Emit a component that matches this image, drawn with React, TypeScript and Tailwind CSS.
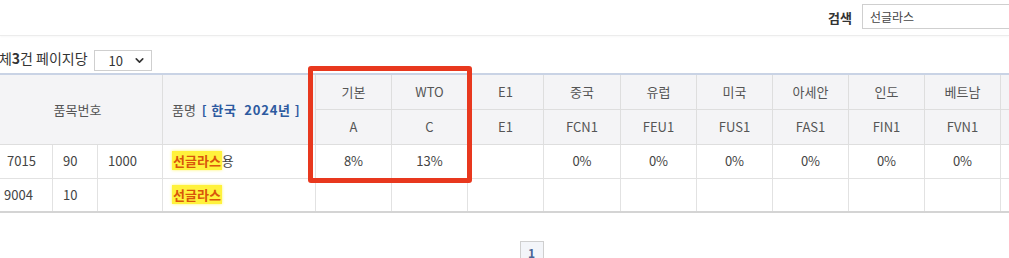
import { ChevronDown } from 'lucide-react';

const countries = [
  { name: '중국', code: 'FCN1' },
  { name: '유럽', code: 'FEU1' },
  { name: '미국', code: 'FUS1' },
  { name: '아세안', code: 'FAS1' },
  { name: '인도', code: 'FIN1' },
  { name: '베트남', code: 'FVN1' },
  { name: '', code: '' },
];

const font = { fontFamily: '"Noto Sans CJK KR", "Noto Sans", sans-serif' };

function Hl({ children }: { children: string }) {
  return <span className="bg-[#fff23c] text-[#d9560b] font-bold px-[1px] shadow-[0_0_3px_#fff56a]">{children}</span>;
}

export default function App() {
  const th = 'border border-[#dedede] bg-[#f4f4f6] text-[#555] font-normal text-center';
  const td = 'border border-[#e2e2e2] text-[#444] h-[34px]';

  return (
    <div className="relative w-[1009px] h-[258px] overflow-hidden bg-white text-[13px]" style={font}>
      {/* 검색 */}
      <div className="h-[36px] flex justify-end items-start pt-[4px] border-b border-[#ececec] shadow-[0_1px_2px_rgba(0,0,0,0.03)]">
        <span className="mt-[4px] mr-[10px] font-bold text-[#333]">검색</span>
        <div className="w-[160px] h-[25px] border border-[#cfcfcf] px-[7px] flex items-center text-[#444] text-[12px] mr-[-13px]">선글라스</div>
      </div>

      {/* 건수 / 페이지당 */}
      <div className="h-[37px] flex items-end pb-[2px]">
        <span className="ml-[-14px] mb-[2px] text-[14px] text-[#333]">전체<b>3</b>건 페이지당</span>
        <div className="ml-[6px] w-[58px] h-[21px] border border-[#cfcfcf] flex items-center justify-between pl-[14px] pr-[5px] text-[#333]">
          <span>10</span>
          <ChevronDown size={13} strokeWidth={3} />
        </div>
      </div>

      {/* 표 */}
      <table className="table-fixed border-collapse ml-[-8px] border-t-2 border-t-[#c9d3e5]" style={{ width: 1088 }}>
        <colgroup>
          <col style={{ width: 60 }} />
          <col style={{ width: 45 }} />
          <col style={{ width: 65 }} />
          <col style={{ width: 153 }} />
          <col style={{ width: 76 }} />
          <col style={{ width: 76 }} />
          <col style={{ width: 76 }} />
          <col style={{ width: 77 }} />
          <col style={{ width: 76 }} />
          <col style={{ width: 76 }} />
          <col style={{ width: 76 }} />
          <col style={{ width: 76 }} />
          <col style={{ width: 76 }} />
          <col style={{ width: 80 }} />
        </colgroup>
        <thead>
          <tr className="h-[35px]">
            <th rowSpan={2} colSpan={3} className={th}>품목번호</th>
            <th rowSpan={2} className={`${th} text-left pl-[9px] whitespace-nowrap`}>
              품명&nbsp; <span className="text-[#2d5aa0] font-bold tracking-[0.8px]">[ 한국&nbsp; 2024년 ]</span>
            </th>
            <th className={th}>기본</th>
            <th className={th}>WTO</th>
            <th className={th}>E1</th>
            {countries.map((c, i) => <th key={i} className={th}>{c.name}</th>)}
          </tr>
          <tr className="h-[35px]">
            <th className={th}>A</th>
            <th className={th}>C</th>
            <th className={th}>E1</th>
            {countries.map((c, i) => <th key={i} className={th}>{c.code}</th>)}
          </tr>
        </thead>
        <tbody>
          <tr>
            <td className={`${td} pl-[14px]`}>7015</td>
            <td className={`${td} pl-[10px]`}>90</td>
            <td className={`${td} pl-[10px]`}>1000</td>
            <td className={`${td} pl-[9px]`}><Hl>선글라스</Hl>용</td>
            <td className={`${td} text-center`}>8%</td>
            <td className={`${td} text-center`}>13%</td>
            <td className={td}></td>
            {countries.map((c, i) => <td key={i} className={`${td} text-center`}>{c.code ? '0%' : ''}</td>)}
          </tr>
          <tr className="border-b-2 border-b-[#d4d4d4]">
            <td className={`${td} pl-[11px]`}>9004</td>
            <td className={`${td} pl-[10px]`}>10</td>
            <td className={td}></td>
            <td className={`${td} pl-[9px]`}><Hl>선글라스</Hl></td>
            <td className={td}></td>
            <td className={td}></td>
            <td className={td}></td>
            {countries.map((_, i) => <td key={i} className={td}></td>)}
          </tr>
        </tbody>
      </table>

      {/* 페이지 */}
      <div className="flex justify-center mt-[28px]">
        <div className="ml-[54px] w-[24px] h-[24px] border border-[#cfcfcf] bg-[#f3f5f9] flex items-center justify-center text-[12px] font-bold text-[#4a6494]">1</div>
      </div>

      {/* 강조 박스 */}
      <div className="absolute left-[308px] top-[66px] w-[164px] h-[117px] border-[5px] border-[#e8381e] rounded-[3px]" />
    </div>
  );
}
